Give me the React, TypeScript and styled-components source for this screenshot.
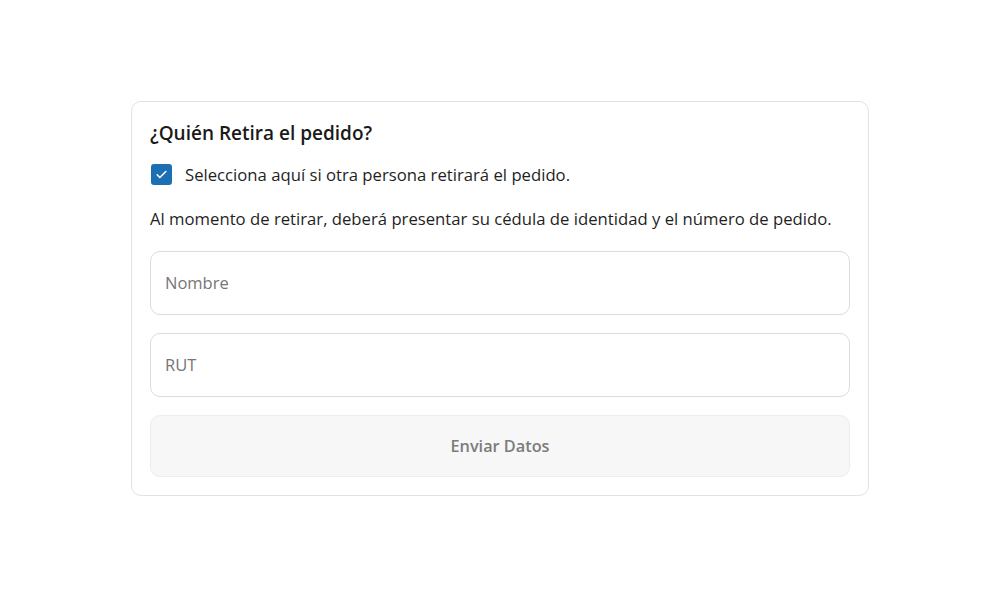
import styled, { createGlobalStyle } from 'styled-components'

const GlobalStyle = createGlobalStyle`
  html, body {
    margin: 0;
    padding: 0;
    background: #ffffff;
    font-family: 'Open Sans', 'Noto Sans', sans-serif;
    color: #1f1f1f;
  }
  #root {
    min-height: 100vh;
  }
`

const PickupForm = () => (
  <Page>
    <Card>
      <Title>¿Quién Retira el pedido?</Title>
      <CheckRow>
        <CheckBox aria-checked="true" role="checkbox">
          <svg width="13" height="13" viewBox="0 0 24 24" fill="none" stroke="white" strokeWidth="2.8" strokeLinecap="round" strokeLinejoin="round">
            <path d="M4 12.5l5 5L20 6.5" />
          </svg>
        </CheckBox>
        <CheckLabel>Selecciona aquí si otra persona retirará el pedido.</CheckLabel>
      </CheckRow>
      <Notice>Al momento de retirar, deberá presentar su cédula de identidad y el número de pedido.</Notice>
      <Fields>
        <Field placeholder="Nombre" />
        <Field placeholder="RUT" />
        <SubmitButton disabled>Enviar Datos</SubmitButton>
      </Fields>
    </Card>
  </Page>
)

export default function App() {
  return (
    <>
      <GlobalStyle />
      <PickupForm />
    </>
  )
}

const Page = styled.div`
  min-height: 100vh;
  box-sizing: border-box;
  padding-bottom: 4px;
  display: flex;
  align-items: center;
  justify-content: center;
`

const Card = styled.section`
  box-sizing: border-box;
  width: 738px;
  padding: 18px;
  border: 1px solid #e2e2e2;
  border-radius: 10px;
  background: #fff;
`

const Title = styled.h2`
  margin: 0;
  font-size: 19px;
  font-weight: 600;
  line-height: 26px;
  color: #1a1a1a;
`

const CheckRow = styled.label`
  display: flex;
  align-items: center;
  gap: 13px;
  margin-top: 18px;
  padding-left: 1px;
`

const CheckBox = styled.span`
  width: 21px;
  height: 21px;
  border-radius: 3px;
  background: #1d6fb4;
  display: flex;
  align-items: center;
  justify-content: center;
  flex-shrink: 0;
`

const CheckLabel = styled.span`
  font-size: 16.7px;
  line-height: 22px;
  color: #1f1f1f;
`

const Notice = styled.p`
  margin: 22px 0 0;
  font-size: 16.7px;
  line-height: 22px;
  color: #1f1f1f;
`

const Fields = styled.div`
  display: flex;
  flex-direction: column;
  gap: 18px;
  margin-top: 21px;
`

const Field = styled.input`
  box-sizing: border-box;
  height: 64px;
  width: 100%;
  padding: 0 14px;
  border: 1px solid #dcdcdc;
  border-radius: 10px;
  font-family: inherit;
  font-size: 16.5px;
  color: #1f1f1f;
  outline: none;
  &::placeholder {
    color: #767676;
  }
`

const SubmitButton = styled.button`
  box-sizing: border-box;
  height: 62px;
  width: 100%;
  border: 1px solid #ececec;
  border-radius: 10px;
  background: #f7f7f7;
  font-family: inherit;
  font-size: 16.3px;
  font-weight: 600;
  color: #7c7c7c;
`
